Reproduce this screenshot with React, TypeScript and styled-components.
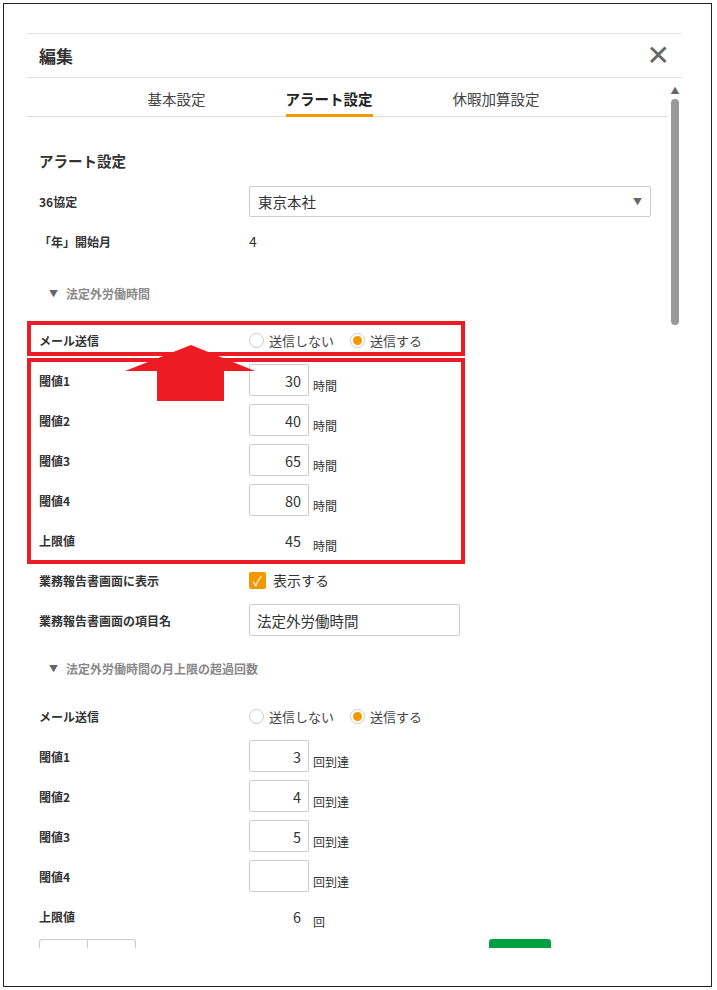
import React from "react";
import styled, { createGlobalStyle } from "styled-components";

const G = createGlobalStyle`
  body { margin:0; background:#fff; font-family:"Noto Sans CJK JP","Noto Sans",sans-serif; color:#333; }
`;
const Frame = styled.div`
  position:relative; width:709px; height:984px; margin:3px; border:1px solid #222; box-sizing:border-box; overflow:hidden;
`;
const Modal = styled.div`
  position:absolute; left:23px; top:29px; width:655px; height:914px; overflow:hidden; background:#fff;
  border-top:1px solid #e3e3e3;
`;
const Header = styled.div`
  height:43px; display:flex; align-items:center; justify-content:space-between; padding:0 12px;
  border-bottom:1px solid #ddd;
`;
const Title = styled.div`font-size:17px; font-weight:700; color:#333;`;
const Close = styled.div`font-size:28px; color:#666; line-height:1; font-family:"DejaVu Sans",sans-serif;`;
const Body = styled.div`position:relative; display:flex;`;
const Main = styled.div`flex:1; width:641px;`;
const Tabs = styled.div`
  display:flex; justify-content:center; gap:80px; height:39px; border-bottom:1px solid #ddd; padding-right:8px; box-sizing:border-box;
`;
const Tab = styled.div<{ $a?: boolean }>`
  font-size:14.5px; padding-top:10px; box-sizing:border-box; height:39px;
  color:${p => p.$a ? "#222" : "#444"}; font-weight:${p => p.$a ? 700 : 400};
  border-bottom:${p => p.$a ? "3px solid #f39800" : "none"};
`;
const Scroll = styled.div`
  width:14px; display:flex; flex-direction:column; align-items:center; padding-top:6px;
`;
const Thumb = styled.div`width:8px; height:226px; background:#999; border-radius:4px; margin-top:2px;`;
const Content = styled.div`padding:33px 12px 0 12px;`;
const H2 = styled.div`font-size:14.5px; font-weight:700; margin-bottom:10px;`;
const Row = styled.div<{ $h?: number }>`
  display:flex; align-items:center; height:${p => p.$h ?? 40}px;
`;
const Label = styled.div`width:210px; font-size:12px; font-weight:700; color:#333;`;
const Val = styled.div`font-size:14px; color:#333;`;
const Select = styled.div`
  width:402px; height:31px; border:1px solid #ccc; border-radius:2px; box-sizing:border-box;
  display:flex; align-items:center; justify-content:space-between; padding:0 8px; font-size:14.5px;
`;
const Caret = styled.span`font-size:9px; color:#666;`;
const Section = styled.div<{ $t?: number; $b?: number }>`
  font-size:12px; font-weight:700; color:#888; padding-left:10px; margin:${p => p.$t ?? 0}px 0 ${p => p.$b ?? 0}px;
  height:30px; display:flex; align-items:center; gap:8px;
`;
const Radio = styled.div<{ $on?: boolean }>`
  width:15px; height:15px; border-radius:50%; border:1px solid #ccc; box-sizing:border-box;
  display:flex; align-items:center; justify-content:center; margin-right:5px;
  &::after { content:""; width:9px; height:9px; border-radius:50%; background:${p => p.$on ? "#f39800" : "transparent"}; }
`;
const RText = styled.span`font-size:13px; margin-right:16px; color:#444;`;
const NumBox = styled.div`
  width:60px; height:32px; border:1px solid #ccc; border-radius:2px; box-sizing:border-box;
  font-size:14.5px; text-align:right; padding:5px 7px 0 0;
`;
const NumPlain = styled.div`width:60px; font-size:14.5px; text-align:right; padding-right:8px; box-sizing:border-box;`;
const Unit = styled.span`font-size:12px; margin-left:4px; align-self:flex-end; margin-bottom:6px;`;
const Check = styled.div`
  width:17px; height:17px; background:#f39800; border-radius:2px; color:#fff; font-size:13px;
  display:flex; align-items:center; justify-content:center; margin-right:7px;
`;
const TextIn = styled.div`
  width:211px; height:32px; border:1px solid #ccc; border-radius:2px; box-sizing:border-box; padding:5px 7px; font-size:14.5px;
`;
const Footer = styled.div`display:flex; justify-content:space-between; padding:3px 105px 0 0;`;
const BtnGroup = styled.div`display:flex; border:1px solid #ccc; border-bottom:none; border-radius:3px 3px 0 0;`;
const GBtn = styled.div`width:47px; height:10px; & + & { border-left:1px solid #ccc; }`;
const Green = styled.div`width:62px; height:10px; background:#00a040; border-radius:3px 3px 0 0;`;
const RedBox = styled.div<{ $t: number; $h: number }>`
  position:absolute; left:23px; top:${p => p.$t}px; width:438px; height:${p => p.$h}px;
  border:4px solid #ed1c24; box-sizing:border-box; pointer-events:none;
`;
const Arrow = styled.svg`position:absolute; left:121px; top:341px;`;

const radios = (
  <>
    <Radio /><RText>送信しない</RText>
    <Radio $on /><RText>送信する</RText>
  </>
);

export default function App() {
  const t1 = [["閾値1", "30"], ["閾値2", "40"], ["閾値3", "65"], ["閾値4", "80"]];
  const t2 = [["閾値1", "3"], ["閾値2", "4"], ["閾値3", "5"], ["閾値4", ""]];
  return (
    <>
      <G />
      <Frame>
        <Modal>
          <Header><Title>編集</Title><Close>✕</Close></Header>
          <Body>
            <Main>
              <Tabs>
                <Tab>基本設定</Tab><Tab $a>アラート設定</Tab><Tab>休暇加算設定</Tab>
              </Tabs>
              <Content>
                <H2>アラート設定</H2>
                <Row><Label>36協定</Label><Select>東京本社<Caret>▼</Caret></Select></Row>
                <Row><Label>「年」開始月</Label><Val>4</Val></Row>
                <Section $t={17} $b={12}><Caret>▼</Caret>法定外労働時間</Section>
                <Row><Label>メール送信</Label>{radios}</Row>
                {t1.map(([l, v]) => (
                  <Row key={l}><Label>{l}</Label><NumBox>{v}</NumBox><Unit>時間</Unit></Row>
                ))}
                <Row><Label>上限値</Label><NumPlain>45</NumPlain><Unit>時間</Unit></Row>
                <Row><Label>業務報告書画面に表示</Label><Check>✓</Check><Val>表示する</Val></Row>
                <Row><Label>業務報告書画面の項目名</Label><TextIn>法定外労働時間</TextIn></Row>
                <Section $t={13} $b={13}><Caret>▼</Caret>法定外労働時間の月上限の超過回数</Section>
                <Row><Label>メール送信</Label>{radios}</Row>
                {t2.map(([l, v]) => (
                  <Row key={l}><Label>{l}</Label><NumBox>{v}</NumBox><Unit>回到達</Unit></Row>
                ))}
                <Row><Label>上限値</Label><NumPlain>6</NumPlain><Unit>回</Unit></Row>
                <Footer>
                  <BtnGroup><GBtn /><GBtn /></BtnGroup>
                  <Green />
                </Footer>
              </Content>
            </Main>
            <Scroll>
              <Caret>▲</Caret>
              <Thumb />
            </Scroll>
          </Body>
        </Modal>
        <RedBox $t={317} $h={35} />
        <RedBox $t={354} $h={206} />
        <Arrow width="130" height="58" viewBox="0 0 130 58">
          <polygon points="66,0 130,26 99,26 99,56 32,56 32,26 0,26" fill="#ed1c24" />
        </Arrow>
      </Frame>
    </>
  );
}
